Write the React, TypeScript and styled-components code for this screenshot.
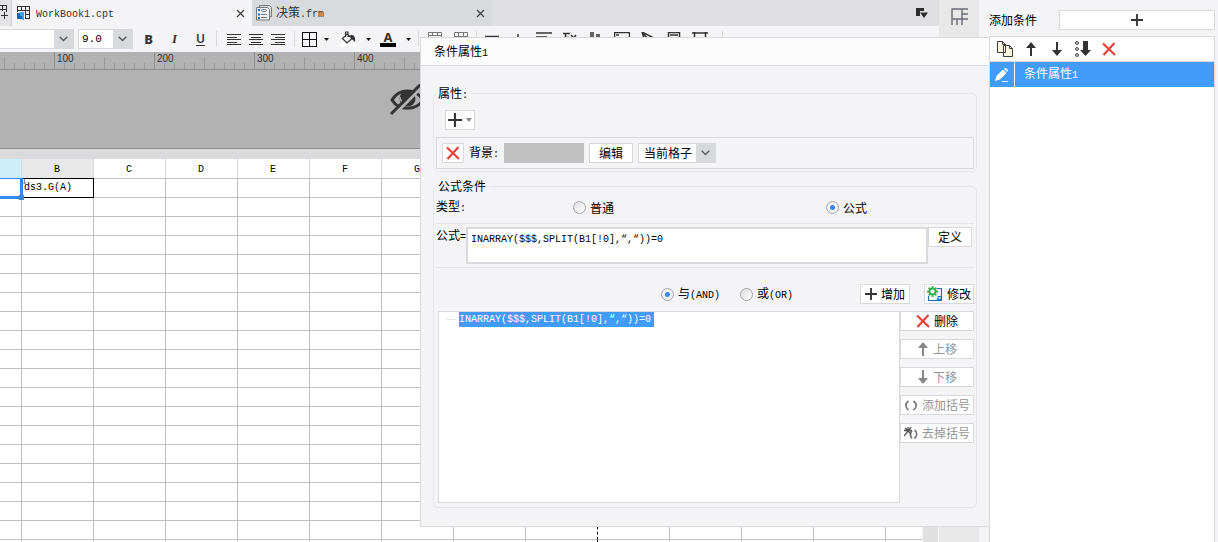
import React, { useState } from 'react';
import styled, { createGlobalStyle, css } from 'styled-components';

const c = {
  panel: '#f4f4f7',
  line: '#d8d9dd',
  soft: '#e6e6e9',
  blue: '#419bf9',
  ink: '#333334',
  grey: '#b2b2b2',
  grid: '#c0c0c0',
  red: '#e8413a',
};

const Global = createGlobalStyle`
  * { box-sizing: border-box; }
  body { margin: 0; background: ${c.panel}; }
  body, button, input, select, textarea {
    font-family: "Noto Sans CJK SC", sans-serif;
    font-size: 12px;
    line-height: 16px;
    color: #000;
  }
  svg { display: block; flex: none; }
`;

const Latin = styled.span`
  font-family: "Liberation Mono", monospace;
  font-size: 10px;
`;

/* Sets the ASCII runs of a label in the narrow monospace face. */
const Text = ({ children }: { children: string }) => (
  <span>
    {children.split(/([ -~]+)/).filter(Boolean).map((part, i) =>
      /^[ -~]/.test(part) ? <Latin key={i}>{part}</Latin> : part,
    )}
  </span>
);

/* ---------- shell ---------- */

const Page = styled.div`
  position: relative;
  display: flex;
  height: 100vh;
  overflow: hidden;
  background: ${c.panel};
`;

const Editor = styled.main`
  flex: 1;
  min-width: 0;
  display: flex;
  flex-direction: column;
`;

const Rail = styled.nav`
  flex: none;
  width: 40px;
  background: #e8e8e8;
`;

const RailButton = styled.button`
  display: flex;
  justify-content: center;
  width: 100%;
  height: 37px;
  padding: 8px 0 0;
  border: 0;
  background: none;
`;

/* ---------- tabs ---------- */

const TabBar = styled.div`
  display: flex;
  flex: none;
  align-items: center;
  height: 26px;
  background: #e0e0e2;
`;

const CutTab = styled.div`
  width: 12px;
  height: 26px;
  padding-top: 5px;
  border-right: 1px solid #cfcfd2;
  background: #e3e3e5;
`;

const Tab = styled.div<{ $active?: boolean }>`
  display: flex;
  align-items: center;
  gap: 4px;
  width: 240px;
  height: 26px;
  padding: 0 7px 0 4px;
  color: ${c.ink};
  background: ${(p) => (p.$active ? c.panel : '#d8dade')};
`;

const TabIcon = styled.span`
  display: flex;
  justify-content: center;
  width: 16px;
`;

const CloseButton = styled.button`
  margin-left: auto;
  padding: 0;
  border: 0;
  background: none;
`;

const TabMenu = styled(CloseButton)`
  margin-right: 10px;
`;

/* ---------- toolbar ---------- */

const Toolbar = styled.div`
  display: flex;
  flex: none;
  align-items: center;
  height: 26px;
  overflow: hidden;
  background: ${c.panel};
`;

const Group = styled.div<{ $w: number; $start?: boolean }>`
  display: flex;
  flex: none;
  align-items: center;
  justify-content: ${(p) => (p.$start ? 'flex-start' : 'center')};
  width: ${(p) => p.$w}px;
  padding-left: ${(p) => (p.$start ? 2 : 0)}px;
`;

const Sep = styled.span`
  flex: none;
  width: 1px;
  height: 16px;
  background: ${c.line};
`;

const Tool = styled.button<{ $w: number }>`
  display: flex;
  flex: none;
  align-items: center;
  justify-content: center;
  width: ${(p) => p.$w}px;
  height: 20px;
  padding: 0;
  border: 0;
  background: none;
  color: ${c.ink};
`;

const Letter = styled(Tool)<{ $kind: 'b' | 'i' | 'u' }>`
  font-family: "Noto Sans", sans-serif;
  font-size: 13px;
  font-weight: 800;
  ${(p) => p.$kind === 'i' && css`font-family: "Liberation Serif", serif; font-style: italic; font-weight: 700;`}
  ${(p) => p.$kind === 'u' && css`font-size: 12px; font-weight: 600; text-decoration: underline; text-underline-offset: 2px;`}
`;

const Combo = styled.div<{ $w: number; $gap?: number; $left?: boolean }>`
  position: relative;
  flex: none;
  width: ${(p) => p.$w}px;
  height: 20px;
  margin-right: ${(p) => p.$gap || 0}px;
  border: 1px solid ${c.line};
  border-left-width: ${(p) => (p.$left ? 0 : 1)}px;
  background: #fff;

  select {
    appearance: none;
    display: block;
    width: 100%;
    height: 18px;
    padding: 0 20px 0 5px;
    border: 0;
    background: none;
    line-height: 18px;
  }
`;

const ComboArrow = styled.span`
  position: absolute;
  top: 0;
  right: 0;
  bottom: 0;
  width: 19px;
  display: flex;
  align-items: center;
  justify-content: center;
  background: ${c.line};
  pointer-events: none;
`;

const SizeCombo = styled(Combo)`
  select {
    padding-left: 3px;
    font-family: "Liberation Mono", monospace;
    font-size: 11px;
  }
`;

/* ---------- canvas ---------- */

const Ruler = styled.div`
  display: flex;
  flex: none;
  height: 18px;
  overflow: hidden;
  border-bottom: 1px solid #8e8e8e;
  background: ${c.grey};
`;

const RulerUnit = styled.div`
  flex: none;
  width: 100px;
  padding-left: 3px;
  font: 10px/14px "Liberation Sans", sans-serif;
  color: ${c.ink};
  background:
    linear-gradient(#8e8e8e, #8e8e8e) 0 0 / 1px 17px no-repeat,
    linear-gradient(#9a9a9a, #9a9a9a) 50px 5px / 1px 12px no-repeat,
    repeating-linear-gradient(90deg, #9a9a9a 0 1px, transparent 1px 10px) 0 11px / 100% 6px no-repeat;

  &:first-child {
    margin-left: -46px;
  }
`;

const ParamPane = styled.div`
  flex: none;
  height: 79px;
  padding: 14px 0 0 390px;
  border-bottom: 1px solid #8e8e8e;
  background: ${c.grey};
`;

const Splitter = styled.div`
  flex: none;
  height: 10px;
  background: #dadadc;
`;

const SheetArea = styled.div`
  flex: 1;
  min-height: 0;
  display: flex;
`;

const SheetClip = styled.div`
  flex: 1;
  min-width: 0;
  overflow: hidden;
  background: #fff;
`;

const ScrollTrack = styled.div`
  flex: none;
  width: 17px;
  border: solid ${c.panel};
  border-width: 0 1px;
  background: #e0e0e0;
`;

const Sheet = styled.table`
  width: 958px;
  table-layout: fixed;
  border-collapse: separate;
  border-spacing: 0;
  font: 10px/18px "Liberation Mono", monospace;
`;

const ColHead = styled.th<{ $first?: boolean; $bg?: string }>`
  width: ${(p) => (p.$first ? 22 : 72)}px;
  height: 20px;
  padding: 2px 1px 0 0;
  border-right: 1px solid ${c.line};
  border-bottom: 1px solid ${c.grid};
  background: ${(p) => p.$bg || '#fff'};
  font-weight: 400;
  line-height: 16px;
`;

const Cell = styled.td<{ $break?: boolean }>`
  position: relative;
  height: 19px;
  padding: 0 0 0 2px;
  border-right: 1px ${(p) => (p.$break ? 'dashed #000' : `solid ${c.grid}`)};
  border-bottom: 1px solid ${c.grid};
`;

const CellFrame = styled.span`
  position: absolute;
  inset: -1px;
  border: 1px solid #000;
`;

const CellMark = styled.svg`
  position: absolute;
  top: 0;
  left: 0;
`;

const Selection = styled.span`
  position: absolute;
  z-index: 1;
  inset: -1px -2px -2px 0;
  border: solid #3a86f0;
  border-width: 1px 3px 3px 0;

  &::after {
    content: '';
    position: absolute;
    right: -4px;
    bottom: -4px;
    width: 5px;
    height: 5px;
    background: #3a86f0;
  }
`;

/* ---------- side panel ---------- */

const Side = styled.aside`
  flex: none;
  display: flex;
  flex-direction: column;
  width: 239px;
  padding: 0 3px 0 10px;
`;

const SideHead = styled.div`
  display: flex;
  align-items: center;
  gap: 22px;
  height: 36px;
  padding-top: 4px;
`;

const AddCondition = styled.button`
  flex: 1;
  display: flex;
  align-items: center;
  justify-content: center;
  height: 20px;
  border: 1px solid ${c.line};
  background: #fff;
`;

const List = styled.div`
  flex: 1;
  border: 1px solid ${c.line};
  border-bottom: 0;
  background: #fff;
`;

const ListTools = styled.div`
  display: flex;
  align-items: center;
  height: 25px;
  padding-left: 2px;
  border-bottom: 1px solid ${c.line};
`;

const ListRow = styled.div`
  display: flex;
  align-items: center;
  height: 25px;
  color: #fff;
  background: ${c.blue};
`;

const RowIcon = styled.button`
  display: flex;
  align-items: center;
  justify-content: center;
  width: 25px;
  height: 25px;
  margin-right: 9px;
  padding: 0;
  border: 0;
  border-right: 1px solid #fff;
  background: none;
`;

/* ---------- dialog ---------- */

const Dialog = styled.section`
  position: absolute;
  z-index: 2;
  top: 37px;
  left: 420px;
  right: 229px;
  border: 1px solid #dadadc;
  border-right: 0;
  background: ${c.panel};
`;

const Title = styled.h1`
  height: 28px;
  margin: 0;
  padding-left: 13px;
  border-bottom: 1px solid ${c.line};
  background: #fcfcfc;
  font-size: 12px;
  font-weight: 400;
  line-height: 26px;
`;

const Body = styled.div`
  display: flex;
  flex-direction: column;
  gap: 6px;
  padding: 19px 12px 18px;
`;

const Fieldset = styled.fieldset`
  min-width: 0;
  margin: 0;
  padding: 0 2px 2px;
  border: 1px solid ${c.soft};
  border-radius: 5px;

  legend {
    height: 16px;
    padding: 0 3px 0 2px;
  }
`;

const Button = styled.button<{ $w: number }>`
  display: flex;
  flex: none;
  align-items: center;
  justify-content: center;
  gap: 4px;
  width: ${(p) => p.$w}px;
  height: 20px;
  padding: 0;
  border: 1px solid ${c.line};
  background: #fff;
  white-space: nowrap;

  &:disabled { color: #949494; }
`;

const AddRow = styled.div`
  padding: 9px 9px 7px;
`;

const AttrRow = styled.div`
  display: flex;
  align-items: center;
  gap: 5px;
  height: 32px;
  padding: 0 5px;
  border: 1px solid ${c.line};
`;

const Swatch = styled.span`
  width: 80px;
  height: 20px;
  background: #c0c0c0;
`;

const AttrName = styled.span`
  width: 30px;
  white-space: nowrap;
`;

const TypeRow = styled.div`
  display: grid;
  grid-template-columns: 137fr 253fr 148fr;
  align-items: center;
  height: 29px;
  padding-bottom: 2px;
`;

const RadioLabel = styled.label`
  display: flex;
  align-items: center;
  gap: 4px;

  input {
    appearance: none;
    width: 13px;
    height: 13px;
    margin: 0;
    border: 1px solid #a6a6a8;
    border-radius: 50%;
    background: linear-gradient(135deg, #dedee0, #fff);
  }
  input:checked {
    background: radial-gradient(circle, #3d87ea 0 2px, #eef2f8 3px);
  }
`;

const FormulaRow = styled.div`
  display: flex;
  align-items: flex-start;
  padding: 3px 2px 3px 0;
  border: solid ${c.soft};
  border-width: 1px 0;

  label { flex: none; width: 30px; white-space: nowrap; }

  textarea {
    flex: 1;
    min-width: 0;
    height: 37px;
    padding: 3px;
    border: 2px solid ${c.line};
    background: #fff;
    font-family: "Liberation Mono", monospace;
    font-size: 10px;
    resize: none;
  }
`;

const LogicRow = styled.div`
  display: flex;
  align-items: center;
  justify-content: flex-end;
  padding: 16px 0 7px;
`;

const Radios = styled.div`
  display: flex;
  gap: 20px;
  margin-right: 67px;
`;

const Buttons = styled.div`
  display: flex;
  gap: 14px;
`;

const TreeRow = styled.div`
  display: flex;
  padding: 0 0 2px 2px;
`;

const Tree = styled.ul`
  flex: 1;
  min-width: 0;
  height: 192px;
  margin: 0;
  padding: 0 0 0 7px;
  border: 1px solid ${c.line};
  background: #fff;
  list-style: none;
`;

const TreeItem = styled.li`
  display: flex;
  align-items: center;
  gap: 3px;

  &::before {
    content: '';
    width: 10px;
    height: 1px;
    background: ${c.soft};
  }

  span {
    padding: 0 3px 0 0;
    background: ${c.blue};
    color: #fff;
    font: 10px/15px "Liberation Mono", monospace;
  }
`;

const Actions = styled.div`
  display: flex;
  flex-direction: column;
  gap: 8px;
`;

/* ---------- icons ---------- */

const Caret = () => (
  <svg width="5" height="3"><path d="M0 0h5L2.500 3z" fill="#111" /></svg>
);
const Chevron = () => (
  <svg width="9" height="6" fill="none" stroke="#555" strokeWidth="1.300"><path d="M.7.7l3.800 3.800L8.300.7" /></svg>
);
const CloseIcon = () => (
  <svg width="9" height="9" stroke="#444" strokeWidth="1.300"><path d="M1 1l7 7M8 1L1 8" /></svg>
);
const Plus = ({ size = 13 }: { size?: number }) => (
  <svg width={size} height={size} viewBox="0 0 13 13" stroke={c.ink} strokeWidth="2"><path d="M6.500 0v13M0 6.500h13" /></svg>
);
const Cross = () => (
  <svg width="14" height="14" stroke={c.red} strokeWidth="2.200"><path d="M1 1.500L13 13M12.500 1L1.500 13" /></svg>
);
const ArrowUp = ({ color = c.ink }: { color?: string }) => (
  <svg width="12" height="14" fill={color}><path d="M6 0l5 6H7v8H5V6H1z" /></svg>
);
const ArrowDown = ({ color = c.ink }: { color?: string }) => (
  <svg width="12" height="14" fill={color}><path d="M6 14l5-6H7V0H5v8H1z" /></svg>
);
const AlignIcon = ({ kind }: { kind: 'l' | 'c' | 'r' }) => (
  <svg width="14" height="11" fill={c.ink} shapeRendering="crispEdges">
    {[14, 10, 14, 10, 14].map((w, i) => (
      <rect key={i} x={kind === 'l' ? 0 : kind === 'c' ? (14 - w) / 2 : 14 - w} y={[0, 3, 5, 8, 10][i]} width={w} height="1" />
    ))}
  </svg>
);
const BorderIcon = () => (
  <svg width="15" height="15" fill="none" stroke="#111" shapeRendering="crispEdges"><path d="M.5.5h14v14H.5zM7.500 0v15M0 7.500h15" /></svg>
);
const FillIcon = () => (
  <svg width="16" height="16" fill="none" stroke={c.ink} strokeWidth="1.200">
    <path d="M0 12h16v4H0z" fill="#fff" stroke="none" />
    <path d="M7 3l5 4.500-5 4.500-4.500-4.500zM5.500 6V1h2.500v5" />
    <path d="M10 4c3-.5 6 1 5 7-1-1-2-2-3.500-3z" fill={c.ink} stroke="none" />
  </svg>
);
const ColorTool = styled.span`
  width: 16px;
  height: 16px;
  border-bottom: 4px solid #000;
  font: 700 13px/12px "Noto Sans", sans-serif;
  text-align: center;
`;
const CptIcon = () => (
  <svg width="14" height="14" fill="none" stroke={c.ink} shapeRendering="crispEdges">
    <path d="M.5 6v-5.500h12v12h-4M.5 4.500h12M4.500.5v4M8.500.5v12M8.500 8.500h4" />
    <path d="M0 7h3v3h2v3H0z" fill="#1164b0" stroke="none" />
    <path d="M3 6h4v8H5v-4H3z" fill="#36a8ea" stroke="none" />
  </svg>
);
const FrmIcon = () => (
  <svg width="16" height="16" fill="none" stroke="#77797c">
    <path d="M3.500 2.500v-2h10l2 2v9h-2" />
    <path d="M.5 2.500h11l2 2v10.500H.5z" fill="#f2f2f4" />
    <rect x="5.500" y="4.500" width="5" height="2" rx="1" />
    <path d="M5 9.500h6M5 12.500h6" />
    <path d="M2 4h2v2H2zM2 8.500h2v2H2zM2 12h2v2H2z" fill="#1c69b4" stroke="none" />
  </svg>
);
const CutIcon = () => (
  <svg width="8" height="14" fill="none" stroke={c.ink} shapeRendering="crispEdges"><path d="M0 .5h6.500v6M0 4.500h6M2.500 0v6M1 10.500h7M4.500 7v7" /></svg>
);
const MenuIcon = () => (
  <svg width="13" height="10" fill="#2b2b2b"><path d="M0 0h8v3H4v5H0zM4 4.500h8L8 10z" /></svg>
);
const FrameIcon = () => (
  <svg width="17" height="17" fill="none" stroke="#6b6c75" strokeWidth="1.400">
    <path d="M1 17V1h16M1 11h16M11 1v16M11 6h6M6 11v6" />
  </svg>
);
const EyeOff = () => (
  <svg width="38" height="32" fill="none">
    <path d="M2 16C9 4 26 4 33 16 26 27 9 27 2 16z" stroke={c.ink} strokeWidth="3" />
    <circle cx="17.500" cy="14.500" r="8" fill={c.ink} />
    <path d="M10 13c0 2 1 4 2 5" stroke={c.grey} strokeWidth="1.500" />
    <path d="M3 32L34 1" stroke={c.grey} strokeWidth="3" />
    <path d="M1 30L32-1" stroke={c.ink} strokeWidth="3" />
  </svg>
);
const CopyIcon = () => (
  <svg width="16" height="16" fill="#fff6df" stroke="#3c3c3c"><path d="M.5.5h5l3 3v8h-8zM5.500.5v3h3M6.500 4.500h6l3 3v8h-9zM12.500 4.500v3h3" /></svg>
);
const MoveBottom = () => (
  <svg width="16" height="16" fill={c.ink}>
    <path d="M8 0h5v9h3l-5.500 6L5 9h3z" />
    <g fill="none" stroke={c.ink}><circle cx="2" cy="2" r="1.400" /><circle cx="2" cy="8" r="1.400" /><circle cx="2" cy="14" r="1.400" /></g>
  </svg>
);
const Pencil = () => (
  <svg width="14" height="14" fill="#fff"><path d="M0 13l1.500-5L8 1.500 11.500 5 5 11.500zM9 .8L10 0c1-.5 3.500 2 3 3l-1 1zM7 13h6v1H7z" /></svg>
);
const EditIcon = () => (
  <svg width="16" height="16" fill="none">
    <path d="M10 2.500h4.500v12H1.500V10" stroke="#1c6fb8" strokeWidth="1.200" />
    <path d="M11 10.500h3v3h-3zM9 14.500l3-3" stroke="#1c6fb8" fill="#fff" />
    <path d="M5.500 0v11M0 5.500h11M1.600 1.600l7.800 7.800M9.400 1.600L1.600 9.400" stroke="#33b34a" strokeWidth="1.800" />
    <circle cx="5.500" cy="5.500" r="3" fill="#fff" stroke="#33b34a" strokeWidth="2" />
  </svg>
);
const Brackets = ({ cut }: { cut?: boolean }) => (
  <svg width="14" height="13" fill="none" stroke="#777" strokeWidth="1.700">
    <path d={cut ? 'M8 3.500C6 6 6 9 8 11.500M10.500 3C13.500 5 13.500 9 10.500 11.500' : 'M4.500 2C1 4.500 1 8.500 4.500 11M9.500 2c3.500 2.500 3.500 6.500 0 9'} />
    {cut && <path d="M0 3.500h8M1 1l6 6M7 0L0 9M4 0v5" stroke="#555" strokeWidth="1.300" />}
  </svg>
);
const mergeTools = [
  'M.5.5h13v12H.5zM0 3.500h14M4.500 0v3M9.500 0v3',
  'M.5.5h13v12H.5zM0 4.500h14M4.500 0v13M9.500 0v13',
];
const extraTools = [
  'M1 4.500h14', 'M8 2v10M2 7.500h12', 'M0 1h16M0 5h11M0 9h16',
  'M1 1.500h7M3.500 1v12M4 5.500h3M9 3l6 7M14 3l-6 8', 'M3 0v14M5 0v14M9 2v12M11 2v12',
  'M.5.5h15v12H.5zM2 3h3', 'M2 0l12 6-6 1zM2 0l4 12', 'M2.500.5h11v13h-11zM4 3h8M4 6h8', 'M0 1h16M2.500 0v14M13.500 0v14',
];

const columns = 'ABCDEFGHIJKLMN'.split('');
const rows = Array.from({ length: 40 }, (_, i) => i);
const rulerMarks = ['', '100', '200', '300', '400'];
const formula = 'INARRAY($$$,SPLIT(B1[!0],“,“))=0';

export default function App() {
  const [type, setType] = useState('formula');
  const [logic, setLogic] = useState('and');

  return (
    <Page>
      <Global />
      <Editor>
        <TabBar>
          <CutTab><CutIcon /></CutTab>
          <Tab $active><TabIcon><CptIcon /></TabIcon><Text>WorkBook1.cpt</Text><CloseButton aria-label="关闭"><CloseIcon /></CloseButton></Tab>
          <Tab><TabIcon><FrmIcon /></TabIcon><Text>决策.frm</Text><CloseButton aria-label="关闭"><CloseIcon /></CloseButton></Tab>
          <TabMenu aria-label="标签"><MenuIcon /></TabMenu>
        </TabBar>

        <Toolbar>
          <Combo $w={74} $gap={4} $left><select aria-label="字体"><option /></select><ComboArrow><Chevron /></ComboArrow></Combo>
          <SizeCombo $w={55}><select aria-label="字号"><option>9.0</option></select><ComboArrow><Chevron /></ComboArrow></SizeCombo>
          <Group $w={83}>
            <Letter $w={26} $kind="b">B</Letter>
            <Letter $w={26} $kind="i">I</Letter>
            <Letter $w={26} $kind="u">U</Letter>
          </Group>
          <Sep />
          <Group $w={77}>
            {(['l', 'c', 'r'] as const).map((k) => <Tool key={k} $w={22} aria-label="对齐"><AlignIcon kind={k} /></Tool>)}
          </Group>
          <Sep />
          <Group $w={123} $start>
            <Tool $w={24} aria-label="边框"><BorderIcon /></Tool><Tool $w={10} aria-label="边框菜单"><Caret /></Tool>
            <Tool $w={34} aria-label="填充"><FillIcon /></Tool><Tool $w={6} aria-label="填充菜单"><Caret /></Tool>
            <Tool $w={34} aria-label="颜色"><ColorTool>A</ColorTool></Tool><Tool $w={6} aria-label="颜色菜单"><Caret /></Tool>
          </Group>
          <Sep />
          <Group $w={57}>
            {mergeTools.map((d) => (
              <Tool key={d} $w={26} aria-label="合并"><svg width="14" height="14" fill="none" stroke="#777"><path d={d} /></svg></Tool>
            ))}
          </Group>
          <Sep />
          <Group $w={245} $start>
            {extraTools.map((d) => (
              <Tool key={d} $w={26} aria-label="插入"><svg width="16" height="14" fill="none" stroke={c.ink} strokeWidth="1.500"><path d={d} /></svg></Tool>
            ))}
          </Group>
          <Sep />
        </Toolbar>

        <Ruler>
          {rulerMarks.map((n) => <RulerUnit key={n}>{n}</RulerUnit>)}
        </Ruler>
        <ParamPane><EyeOff /></ParamPane>
        <Splitter />
        <SheetArea>
          <SheetClip>
            <Sheet>
              <thead>
                <tr>
                  {columns.map((n, i) => (
                    <ColHead key={n} $first={i === 0} $bg={['#cdeefa', '#e8e8e8'][i]}>{i > 0 && i < 13 ? n : ''}</ColHead>
                  ))}
                </tr>
              </thead>
              <tbody>
                {rows.map((r) => (
                  <tr key={r}>
                    {columns.map((n, i) => (
                      <Cell key={n} $break={n === 'I'}>
                        {r === 0 && i === 0 && <Selection />}
                        {r === 0 && i === 1 && (
                          <>
                            <CellFrame />
                            <CellMark width="5" height="6" stroke="#888" fill="none"><path d="M2.500 0v5M.5 3l2 2 2-2" /></CellMark>
                            ds3.G(A)
                          </>
                        )}
                      </Cell>
                    ))}
                  </tr>
                ))}
              </tbody>
            </Sheet>
          </SheetClip>
          <ScrollTrack />
        </SheetArea>
      </Editor>

      <Rail><RailButton aria-label="单元格"><FrameIcon /></RailButton></Rail>

      <Side>
        <SideHead>
          <Text>添加条件</Text>
          <AddCondition aria-label="添加条件"><Plus size={12} /></AddCondition>
        </SideHead>
        <List>
          <ListTools>
            <Tool $w={26} aria-label="复制"><CopyIcon /></Tool>
            <Tool $w={26} aria-label="上移"><ArrowUp /></Tool>
            <Tool $w={26} aria-label="下移"><ArrowDown /></Tool>
            <Tool $w={26} aria-label="置底"><MoveBottom /></Tool>
            <Tool $w={26} aria-label="删除"><Cross /></Tool>
          </ListTools>
          <ListRow><RowIcon aria-label="编辑"><Pencil /></RowIcon><Text>条件属性1</Text></ListRow>
        </List>
      </Side>

      <Dialog role="dialog" aria-labelledby="dialog-title">
        <Title id="dialog-title"><Text>条件属性1</Text></Title>
        <Body>
          <Fieldset>
            <legend><Text>属性:</Text></legend>
            <AddRow>
              <Button $w={30} aria-label="添加属性">
                <Plus size={14} /><svg width="6" height="4" fill="#888"><path d="M0 0h6L3 4z" /></svg>
              </Button>
            </AddRow>
            <AttrRow>
              <Button $w={22} aria-label="删除背景"><Cross /></Button>
              <AttrName><Text>背景:</Text></AttrName>
              <Swatch />
              <Button $w={44}>编辑</Button>
              <Combo $w={78}>
                <select aria-label="范围"><option>当前格子</option></select>
                <ComboArrow><Chevron /></ComboArrow>
              </Combo>
            </AttrRow>
          </Fieldset>

          <Fieldset>
            <legend>公式条件</legend>
            <TypeRow>
              <Text>类型:</Text>
              <RadioLabel><input type="radio" name="type" checked={type === 'normal'} onChange={() => setType('normal')} />普通</RadioLabel>
              <RadioLabel><input type="radio" name="type" checked={type === 'formula'} onChange={() => setType('formula')} />公式</RadioLabel>
            </TypeRow>
            <FormulaRow>
              <label htmlFor="formula"><Text>公式=</Text></label>
              <textarea id="formula" defaultValue={formula} />
              <Button $w={44}>定义</Button>
            </FormulaRow>
            <LogicRow>
              <Radios>
                <RadioLabel><input type="radio" name="logic" checked={logic === 'and'} onChange={() => setLogic('and')} /><Text>与(AND)</Text></RadioLabel>
                <RadioLabel><input type="radio" name="logic" checked={logic === 'or'} onChange={() => setLogic('or')} /><Text>或(OR)</Text></RadioLabel>
              </Radios>
              <Buttons>
                <Button $w={50}><Plus size={12} />增加</Button>
                <Button $w={50}><EditIcon />修改</Button>
              </Buttons>
            </LogicRow>
            <TreeRow>
              <Tree><TreeItem><span>{formula}</span></TreeItem></Tree>
              <Actions>
                <Button $w={74}><Cross />删除</Button>
                <Button $w={74} disabled><ArrowUp color="#888" />上移</Button>
                <Button $w={74} disabled><ArrowDown color="#888" />下移</Button>
                <Button $w={74} disabled><Brackets />添加括号</Button>
                <Button $w={74} disabled><Brackets cut />去掉括号</Button>
              </Actions>
            </TreeRow>
          </Fieldset>
        </Body>
      </Dialog>
    </Page>
  );
}
